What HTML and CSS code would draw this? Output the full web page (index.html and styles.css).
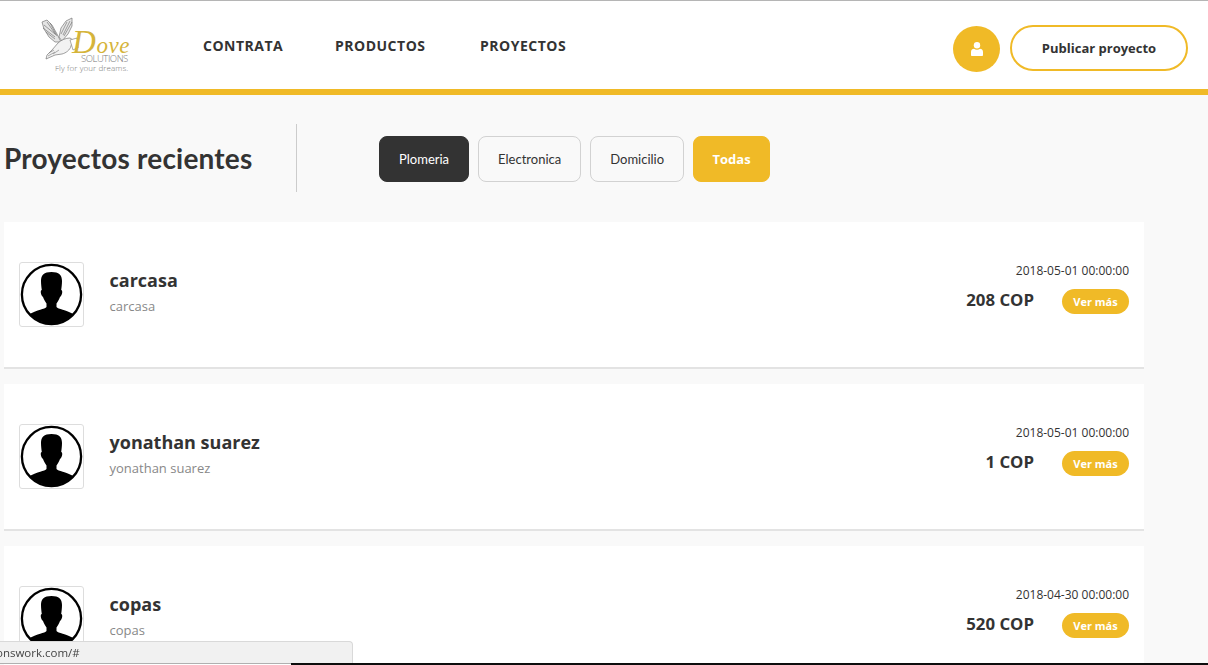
FILE: index.html
```html
<!DOCTYPE html>
<html lang="es">
<head>
<meta charset="utf-8">
<title>Proyectos recientes</title>
<link rel="stylesheet" href="styles.css">
</head>
<body>
<svg class="defs" width="0" height="0" aria-hidden="true">
  <symbol id="avatar" viewBox="0 0 63 63">
    <circle cx="31.500" cy="31.500" r="29.600" fill="#fff" stroke="#000" stroke-width="2.300"/>
    <path d="M31.500 9C24 9 21 12 21 18c0 3 .5 7 .8 9-1.500 0-1.300 4 .2 6l1 1c1 3 2.500 5 3.500 6.500V44c-1.500 2-9.500 3-17 7a30 30 0 0 0 44 0c-7.500-4-15.500-5-17-7v-3.500c1-1.500 2.500-3.500 3.500-6.500l1-1c1.500-2 1.700-6 .2-6 .3-2 .8-6 .8-9 0-6-3-9-10.500-9z" fill="#000"/>
  </symbol>
</svg>

<header class="topbar">
  <a class="logo" href="#">
    <svg class="dove" viewBox="0 0 38 46" aria-hidden="true">
      <path d="M1 6 6 4l5 5 5 9 4 8-6 0-6-5-5-8z" fill="#e4e4e4" stroke="#777" stroke-width=".7"/>
      <path d="M3 9l11 9M2 12l12 9M5 16l9 7M6 6l9 13M9 7l7 13" fill="none" stroke="#666" stroke-width=".6"/>
      <path d="M31 2l-6 3-5 7-2 9 3 4 6-7 4-8z" fill="#e8e8e8" stroke="#777" stroke-width=".7"/>
      <path d="M29 5l-7 14M31 6l-8 14M26 6l-6 12" fill="none" stroke="#666" stroke-width=".6"/>
      <path d="M17 27c3-3 8-5 12-5l3 2-2 6c-1 4-5 7-9 8l-7 1-9 4 1-4 5-5z" fill="#f2f2f2" stroke="#777" stroke-width=".7"/>
      <path d="M8 37l5-3M7 40l7-4M12 38l6-4" fill="none" stroke="#777" stroke-width=".6"/>
      <path d="M29 24l7-2 2 9-6 3z" fill="#fff" stroke="#888" stroke-width=".7"/>
    </svg>
    <span class="logo-name"><span class="logo-cap">D</span>ove</span>
    <span class="logo-sub">SOLUTIONS</span>
    <span class="logo-tag">Fly for your dreams.</span>
  </a>
  <nav class="mainnav">
    <a href="#">CONTRATA</a>
    <a href="#">PRODUCTOS</a>
    <a href="#">PROYECTOS</a>
  </nav>
  <div class="actions">
    <a class="userbtn" href="#" aria-label="Usuario">
      <svg viewBox="0 0 12 14" width="12" height="14"><circle cx="6" cy="3.300" r="3.200" fill="#fff"/><path d="M0 13v-3c0-2 1.500-3.200 3-3.200.9.600 1.900 1 3 1s2.100-.4 3-1c1.500 0 3 1.200 3 3.200v3c0 .6-.5 1-1 1H1c-.5 0-1-.4-1-1z" fill="#fff"/></svg>
    </a>
    <a class="publish" href="#">Publicar proyecto</a>
  </div>
</header>

<main class="content">
  <section class="heading">
    <h1>Proyectos recientes</h1>
    <div class="filters">
      <a class="chip chip-dark" href="#">Plomeria</a>
      <a class="chip" href="#">Electronica</a>
      <a class="chip" href="#">Domicilio</a>
      <a class="chip chip-all" href="#">Todas</a>
    </div>
  </section>

  <section class="list">
    <article class="card">
      <div class="thumb"><svg><use href="#avatar"/></svg></div>
      <div class="info"><h2>carcasa</h2><p>carcasa</p></div>
      <div class="meta">
        <time>2018-05-01 00:00:00</time>
        <div class="row"><strong>208 COP</strong><a class="more" href="#">Ver más</a></div>
      </div>
    </article>
    <article class="card">
      <div class="thumb"><svg><use href="#avatar"/></svg></div>
      <div class="info"><h2>yonathan suarez</h2><p>yonathan suarez</p></div>
      <div class="meta">
        <time>2018-05-01 00:00:00</time>
        <div class="row"><strong>1 COP</strong><a class="more" href="#">Ver más</a></div>
      </div>
    </article>
    <article class="card">
      <div class="thumb"><svg><use href="#avatar"/></svg></div>
      <div class="info"><h2>copas</h2><p>copas</p></div>
      <div class="meta">
        <time>2018-04-30 00:00:00</time>
        <div class="row"><strong>520 COP</strong><a class="more" href="#">Ver más</a></div>
      </div>
    </article>
  </section>
</main>

<div class="statusbubble"><span>onswork.com/#</span></div>
<div class="edge"></div>
</body>
</html>
```

FILE: styles.css
```css
* { box-sizing: border-box; }
html, body { height: 100%; }
body {
  margin: 0;
  overflow: hidden;
  background: #f9f9f9;
  color: #333;
  font-family: "Open Sans", sans-serif;
}
a { color: inherit; text-decoration: none; }
.defs { position: absolute; }

.topbar {
  height: 95px;
  display: flex;
  align-items: flex-start;
  background: #fff;
  border-top: 1px solid #b5b5b5;
  border-bottom: 6px solid #f0ba27;
}
.logo {
  width: 90px;
  height: 60px;
  margin: 14px 0 0 41px;
  position: relative;
  flex: none;
}
.dove { position: absolute; left: 0; top: 1px; width: 38px; height: 46px; }
.logo-name {
  position: absolute;
  left: 31px;
  top: 15px;
  height: 24px;
  font: italic 23px/24px "Liberation Serif", serif;
  letter-spacing: .6px;
  white-space: nowrap;
  color: #d5b43a;
}
.logo-cap { font-size: 33px; line-height: 24px; }
.logo-sub {
  position: absolute;
  left: 40px;
  top: 39px;
  font: 300 9.500px/9px "Open Sans", sans-serif;
  letter-spacing: -.45px;
  color: #777;
}
.logo-tag {
  position: absolute;
  left: 14px;
  top: 48px;
  font: 300 8px/10px "Open Sans", sans-serif;
  letter-spacing: .1px;
  white-space: nowrap;
  color: #777;
}
.mainnav {
  display: grid;
  grid-template-columns: 132px 145px auto;
  margin: 35px 0 0 72px;
  font-size: 14px;
  line-height: 20px;
  font-weight: 700;
  letter-spacing: .5px;
}
.actions {
  margin-left: auto;
  margin-top: 24px;
  padding-right: 20px;
  display: flex;
  align-items: flex-start;
  gap: 10px;
}
.userbtn {
  width: 47px;
  height: 46px;
  margin-top: 1px;
  border-radius: 50%;
  background: #f0ba27;
  display: flex;
  align-items: center;
  justify-content: center;
}
.publish {
  width: 178px;
  height: 46px;
  padding-bottom: 1px;
  border: 2px solid #f0ba27;
  border-radius: 23px;
  display: flex;
  align-items: center;
  justify-content: center;
  font-size: 13px;
  font-weight: 700;
  background: #fff;
}

.content { padding: 29px 64px 0 4px; }
.heading {
  display: flex;
  align-items: center;
  height: 68px;
}
.heading h1 {
  margin: 0;
  width: 293px;
  height: 68px;
  border-right: 1px solid #ccc;
  display: flex;
  align-items: center;
  font: 700 28px/34px Lato, sans-serif;
  letter-spacing: .2px;
  color: #333;
}
.filters {
  display: flex;
  gap: 9px;
  margin: 2px 0 0 82px;
}
.chip {
  height: 46px;
  padding: 0 19px;
  display: flex;
  align-items: center;
  border: 1px solid #d2d2d2;
  border-radius: 8px;
  font: 400 13px/20px Lato, sans-serif;
  color: #333;
}
.chip-dark {
  background: #333;
  border-color: #333;
  color: #fff;
}
.chip-all {
  width: 77px;
  padding: 0;
  justify-content: center;
  background: #f0ba27;
  border-color: #f0ba27;
  color: #fff;
  font: 700 13px/20px "Open Sans", sans-serif;
}

.list {
  margin-top: 30px;
  display: flex;
  flex-direction: column;
  gap: 15px;
}
.card {
  height: 147px;
  flex: none;
  padding: 40px 15px 0;
  display: flex;
  align-items: flex-start;
  background: #fff;
  border-bottom: 2px solid #e3e3e3;
}
.thumb {
  width: 65px;
  height: 65px;
  flex: none;
  border: 1px solid #ddd;
  border-radius: 3px;
  background: #fff;
}
.thumb svg { display: block; width: 63px; height: 63px; }
.info { margin-left: 25.500px; padding-top: 4px; }
.info h2 {
  margin: 0;
  font-size: 18px;
  line-height: 28px;
  font-weight: 700;
  color: #333;
}
.info p {
  margin: 2px 0 0;
  font-size: 13px;
  line-height: 20px;
  color: #888;
}
.meta {
  margin-left: auto;
  display: flex;
  flex-direction: column;
  align-items: flex-end;
  font-size: 12px;
}
.meta time { line-height: 18px; }
.row {
  display: flex;
  align-items: flex-start;
  gap: 28px;
}
.row strong {
  margin-top: 8px;
  font-size: 16.800px;
  line-height: 23px;
  font-weight: 700;
  color: #333;
}
.more {
  width: 67px;
  height: 25px;
  margin-top: 9px;
  border-radius: 13px;
  background: #f0ba27;
  color: #fff;
  display: flex;
  align-items: center;
  justify-content: center;
  font-size: 11px;
  font-weight: 700;
}

.statusbubble {
  position: fixed;
  left: 0;
  top: 641px;
  width: 353px;
  height: 23px;
  background: #f1f1f1;
  border: 1px solid #d9d9d9;
  border-left: 0;
  border-bottom-color: #b0b0b0;
  border-top-right-radius: 4px;
  overflow: hidden;
  font: 11.500px/22px "Open Sans", sans-serif;
  color: #444;
}
.statusbubble span { display: block; margin-left: -4px; white-space: nowrap; }
.edge {
  position: fixed;
  left: 291px;
  right: 0;
  bottom: 0;
  height: 2px;
  background: #0d0d0d;
}
```
